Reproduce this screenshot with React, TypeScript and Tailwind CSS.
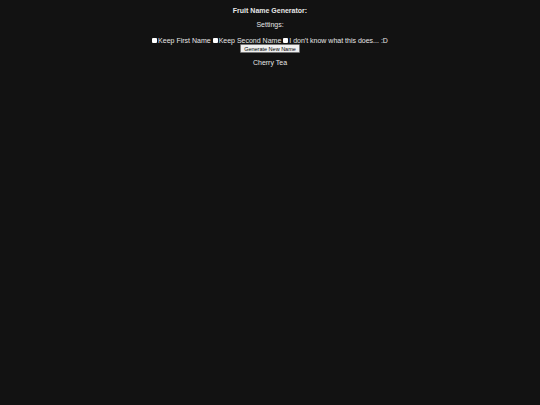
export default function App() {
  return (
    <div className="min-h-screen bg-[#121212] text-[#e6e6e6] text-[7px] leading-[7px] text-center pt-[7px]" style={{ fontFamily: '"Liberation Sans", Arial, sans-serif' }}>
      <h1 className="font-bold text-[7px] mb-[7px]">Fruit Name Generator:</h1>
      <p className="mb-[9px]">Settings:</p>
      <div className="flex items-center justify-center">
        <label className="flex items-center mr-[2px]">
          <input type="checkbox" className="w-[5px] h-[5px] m-0 mr-[1px] appearance-none bg-white rounded-[1px]" />
          Keep First Name
        </label>
        <label className="flex items-center mr-[2px]">
          <input type="checkbox" className="w-[5px] h-[5px] m-0 mr-[1px] appearance-none bg-white rounded-[1px]" />
          Keep Second Name
        </label>
        <label className="flex items-center">
          <input type="checkbox" className="w-[5px] h-[5px] m-0 mr-[1px] appearance-none bg-white rounded-[1px]" />
          I don't know what this does... :D
        </label>
      </div>
      <div className="mt-0 leading-none">
        <button className="bg-[#efefef] text-black text-[5.5px] leading-[6px] px-[3px] py-[0.5px] border border-[#767676] rounded-[1px]">Generate New Name</button>
      </div>
      <p className="mt-[6px]">Cherry Tea</p>
    </div>
  );
}
